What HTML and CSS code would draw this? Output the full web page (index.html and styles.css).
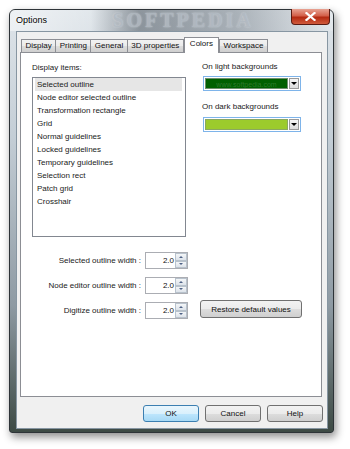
FILE: index.html
```html
<!DOCTYPE html>
<html lang="en">
<head>
    <meta charset="UTF-8" />
    <title>Options</title>
    <link rel="stylesheet" href="styles.css">
</head>
<body>
<div class="window">
    <div class="titlebar">
        <span class="title">Options</span>
        <span class="watermark">SOFTPEDIA</span>
        <span class="close">
            <svg width="11" height="9" viewBox="0 0 11 9"><path d="M1.5 1 L9.5 8 M9.5 1 L1.5 8" stroke="#fff" stroke-width="2.2" stroke-linecap="square"/></svg>
        </span>
    </div>

    <div class="client">
        <div class="tabs">
            <span class="tab">Display</span>
            <span class="tab">Printing</span>
            <span class="tab">General</span>
            <span class="tab">3D properties</span>
            <span class="tab active">Colors</span>
            <span class="tab">Workspace</span>
        </div>

        <div class="panel">
            <div class="top">
                <div class="items-col">
                    <div class="label">Display items:</div>
                    <ul class="listbox">
                        <li class="selected">Selected outline</li>
                        <li>Node editor selected outline</li>
                        <li>Transformation rectangle</li>
                        <li>Grid</li>
                        <li>Normal guidelines</li>
                        <li>Locked guidelines</li>
                        <li>Temporary guidelines</li>
                        <li>Selection rect</li>
                        <li>Patch grid</li>
                        <li>Crosshair</li>
                    </ul>
                </div>
                <div class="colors-col">
                    <div class="label">On light backgrounds</div>
                    <div class="combo first">
                        <span class="swatch green"><span class="mark">www.softpedia.com</span></span>
                        <span class="drop"></span>
                    </div>
                    <div class="label second">On dark backgrounds</div>
                    <div class="combo last">
                        <span class="swatch lime"></span>
                        <span class="drop"></span>
                    </div>
                </div>
            </div>

            <div class="widths">
                <div class="row">
                    <span class="row-label">Selected outline width :</span>
                    <div class="spin"><span class="val">2.0</span><span class="arrows"><i class="up"></i><i class="down"></i></span></div>
                </div>
                <div class="row">
                    <span class="row-label">Node editor outline width :</span>
                    <div class="spin"><span class="val">2.0</span><span class="arrows"><i class="up"></i><i class="down"></i></span></div>
                </div>
                <div class="row">
                    <span class="row-label">Digitize outline width :</span>
                    <div class="spin"><span class="val">2.0</span><span class="arrows"><i class="up"></i><i class="down"></i></span></div>
                    <button class="btn restore">Restore default values</button>
                </div>
            </div>
        </div>

        <div class="buttons">
            <button class="btn default">OK</button>
            <button class="btn">Cancel</button>
            <button class="btn">Help</button>
        </div>
    </div>
</div>
</body>
</html>
```

FILE: styles.css
```css
* {
    box-sizing: border-box;
    font-family: 'Liberation Sans', Arial, sans-serif;
}
body {
    margin: 0;
    width: 350px;
    height: 449px;
    background: #fff;
    overflow: hidden;
}
.window {
    margin: 9px 0 0 9px;
    width: 325px;
    height: 424px;
    border: 1px solid #2e3438;
    border-radius: 6px 6px 3px 3px;
    background: linear-gradient(180deg, #dfe5ea 0%, #c4ced6 30%, #8e9aa3 70%, #3d4a44 100%);
    box-shadow: 2px 4px 9px rgba(0,0,0,0.45);
}
.titlebar {
    height: 21px;
    display: flex;
    align-items: flex-start;
    padding-left: 6px;
    background: linear-gradient(90deg, rgba(255,255,255,0.5) 0%, rgba(255,255,255,0.1) 25%, rgba(60,70,80,0.5) 40%, rgba(90,100,110,0.4) 70%, rgba(255,255,255,0.2) 100%);
    border-radius: 5px 5px 0 0;
}
.title {
    font-size: 9px;
    line-height: 21px;
    color: #000;
    text-shadow: 0 0 6px #fff, 0 0 3px #fff;
}
.watermark {
    flex: 1;
    text-align: center;
    font-family: 'Liberation Serif', serif;
    font-weight: bold;
    font-size: 20px;
    line-height: 20px;
    letter-spacing: 3px;
    color: #b4bcc4;
    text-shadow: 0 0 2px #d8dde2;
    padding-left: 28px;
    opacity: 0.8;
    overflow: hidden;
}
.close {
    width: 39px;
    height: 16px;
    margin-right: 3px;
    margin-top: -1px;
    display: flex;
    align-items: center;
    justify-content: center;
    border: 1px solid #5a1a12;
    border-top: none;
    border-radius: 0 0 4px 4px;
    background: linear-gradient(180deg, #e8a393 0%, #d3604a 45%, #b42a12 55%, #d05a3c 100%);
}
.client {
    margin: 0 5px 0 6px;
    height: 398px;
    border: 1px solid #8796a2;
    background: #f0f0f0;
    padding: 5px 5px 0 3px;
}
.tabs {
    height: 15px;
    display: flex;
    align-items: flex-end;
    padding-left: 1px;
}
.tab {
    height: 13px;
    padding: 0 3.5px;
    margin-right: -1px;
    font-size: 8px;
    line-height: 12px;
    color: #111;
    border: 1px solid #8c8e94;
    border-bottom: none;
    background: linear-gradient(180deg, #f2f2f2 0%, #ebebeb 50%, #dddddd 51%, #cfcfcf 100%);
}
.tab.active {
    height: 16px;
    margin: 0 0 -1px 1px;
    padding: 0 5px;
    line-height: 12px;
    background: #fff;
    position: relative;
    z-index: 1;
}
.panel {
    height: 345px;
    border: 1px solid #8c8e94;
    background: #fff;
}
.top {
    display: flex;
    padding-left: 11px;
}
.label {
    font-size: 8px;
    line-height: 12px;
    color: #1a1a1a;
}
.items-col {
    width: 154px;
    padding-top: 9px;
}
.listbox {
    list-style: none;
    margin: 3px 0 0;
    padding: 0 3px 0 2px;
    height: 160px;
    border: 1px solid #828790;
}
.listbox li {
    height: 13px;
    line-height: 13px;
    font-size: 8px;
    padding-left: 2px;
    color: #1a1a1a;
}
.listbox li.selected {
    background: #e6e6e6;
}
.colors-col {
    margin-left: 16px;
    padding-top: 8px;
}
.combo {
    width: 98px;
    height: 15px;
    display: flex;
    border: 1px solid #7eb4ea;
    background: #fff;
    padding: 1px;
    margin: 3px 0 0 1px;
}
.combo.last {
    margin-top: 4px;
}
.label.second {
    margin-top: 10px;
}
.swatch {
    flex: 1;
    border: 1px solid #6d8e6d;
    overflow: hidden;
    font-size: 7px;
    line-height: 11px;
    text-align: center;
}
.swatch.green {
    background: #006000;
}
.swatch.lime {
    background: #9ccb2c;
    border-color: #8aa860;
}
.mark {
    color: rgba(255,255,255,0.18);
}
.drop {
    width: 10px;
    margin-left: 1px;
    background: linear-gradient(180deg, #f6f6f6, #dcdcdc);
    border: 1px solid #9a9a9a;
    display: flex;
    align-items: center;
    justify-content: center;
}
.drop::after {
    content: "";
    border-left: 3px solid transparent;
    border-right: 3px solid transparent;
    border-top: 3px solid #000;
}
.widths {
    margin-top: 15px;
    display: flex;
    flex-direction: column;
    gap: 8px;
}
.row {
    display: flex;
    align-items: center;
    height: 17px;
}
.row-label {
    width: 120px;
    text-align: right;
    font-size: 8px;
    color: #1a1a1a;
}
.spin {
    width: 43px;
    height: 17px;
    margin-left: 4px;
    display: flex;
    border: 1px solid #abadb3;
    background: #fff;
}
.val {
    flex: 1;
    text-align: right;
    font-size: 8px;
    line-height: 15px;
    padding-right: 1px;
    color: #111;
}
.arrows {
    width: 12px;
    display: flex;
    flex-direction: column;
}
.arrows i {
    flex: 1;
    border: 1px solid #b8c2cc;
    background: linear-gradient(180deg, #f4f6f8, #dde3ea);
    display: flex;
    align-items: center;
    justify-content: center;
}
.arrows i::after {
    content: "";
    border-left: 2px solid transparent;
    border-right: 2px solid transparent;
}
.arrows i.up::after {
    border-bottom: 2px solid #4d6185;
}
.arrows i.down::after {
    border-top: 2px solid #4d6185;
}
.btn {
    height: 17px;
    padding: 0;
    font-size: 8px;
    color: #111;
    border: 1px solid #707070;
    border-radius: 3px;
    background: linear-gradient(180deg, #f2f2f2 0%, #ebebeb 50%, #dddddd 51%, #cfcfcf 100%);
}
.btn.restore {
    width: 102px;
    height: 18px;
    margin: -3px 0 0 12px;
}
.buttons {
    display: flex;
    justify-content: flex-end;
    gap: 6px;
    margin-top: 8px;
    margin-right: -1px;
}
.buttons .btn {
    width: 56px;
}
.btn.default {
    border-color: #3c7fb1;
    background: linear-gradient(180deg, #eaf6fd 0%, #d9f0fc 50%, #bee6fd 51%, #a7d9f5 100%);
}
```
